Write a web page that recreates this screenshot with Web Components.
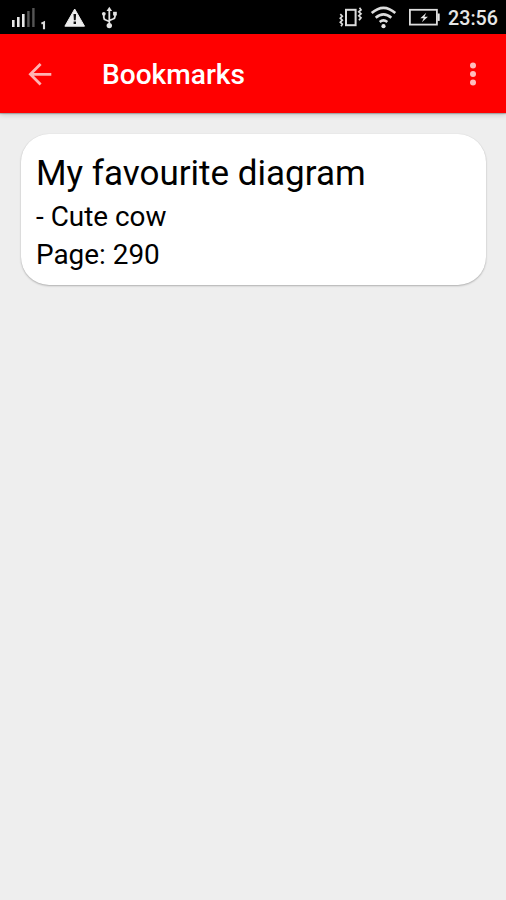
<!DOCTYPE html>
<html lang="en">
<head>
<meta charset="utf-8">
<title>Bookmarks</title>
<style>
  html, body { margin: 0; height: 100%; background: #eee; }
  body { font-family: Roboto, "Noto Sans", sans-serif; overflow: hidden; }
</style>
</head>
<body>
<bookmarks-app></bookmarks-app>
<script>
class StatusBar extends HTMLElement {
  constructor() {
    super();
    this.attachShadow({ mode: "open" }).innerHTML = `
      <style>
        :host { display: flex; height: 34px; background: #000; color: #e6e6e6; align-items: flex-start; box-sizing: border-box; padding: 0 8px 0 10px; }
        svg { display: block; flex: none; }
        .gap { flex: 1; }
        .time { font-size: 19.7px; font-weight: 500; line-height: 38px; height: 34px; width: 50px; white-space: nowrap; }
      </style>
      <svg width="110" height="34" viewBox="10 0 110 34">
        <g fill="#e8e8e8"><rect x="12" y="20" width="2.6" height="7"/><rect x="17" y="17" width="2.6" height="10"/><rect x="22" y="14" width="2.6" height="13"/></g>
        <g fill="#555"><rect x="27.2" y="11" width="2.4" height="16"/><rect x="32.2" y="8" width="2.4" height="19"/></g>
        <path d="M41.4 23.6l2.6-1.2v6.8" fill="none" stroke="#ddd" stroke-width="2.1"/>
        <path d="M74.7 9L84.5 26.2H64.9Z" fill="#eee" stroke="#eee" stroke-linejoin="round"/>
        <path d="M73.5 14h2.6l-.4 6.2h-1.8zM73.6 21.6h2.4v2.4h-2.4z" fill="#111"/>
        <g fill="none" stroke="#e4e4e4" stroke-width="1.8"><path d="M109.3 10v15M103.8 14v3.5q0 2 2 2.5l3.5 1.5M115 13v3.5q0 1.8-2 2.5l-3.7 1.5"/></g>
        <g fill="#e4e4e4"><path d="M109.3 6.8l2.8 4.2h-5.6z"/><circle cx="103.8" cy="13.8" r="1.9"/><rect x="113.1" y="11.8" width="3.7" height="3.7"/><circle cx="109.3" cy="25.6" r="2.7"/></g>
      </svg>
      <div class="gap"></div>
      <svg width="110" height="34" viewBox="338 0 110 34">
        <g fill="none" stroke="#ddd">
          <rect x="346" y="9.8" width="9.6" height="15.4" stroke-width="2"/>
          <path d="M340.3 14.2l2 2-2 2 2 2-2 2 2 2-1.2 2M359.5 7.8l1.5 2-2.2 2 2.2 2-2.2 2 2.2 2-2 2.5" stroke-width="1.7"/>
          <path d="M371.7 13q11.8-10.4 23.6 0M375.7 17.8q7.8-6.8 15.6 0M379.7 22q3.8-3.2 7.6 0" stroke-width="2.6"/>
          <rect x="409.9" y="9.8" width="27" height="14.8" stroke-width="1.8"/>
        </g>
        <g fill="#e8e8e8"><circle cx="383.5" cy="26.2" r="2.1"/><rect x="437.5" y="13.5" width="2.2" height="7.4"/><path d="M426.3 12.8l-6 5.4h3.4l-1.8 4 6-5.4h-3.5z"/></g>
      </svg>
      <div class="time"><slot></slot></div>`;
  }
}
customElements.define("status-bar", StatusBar);

class AppToolbar extends HTMLElement {
  constructor() {
    super();
    this.attachShadow({ mode: "open" }).innerHTML = `
      <style>
        :host { display: flex; align-items: center; box-sizing: border-box; height: 79px; padding: 0 22px 0 28px; background: #f00; color: #fff; box-shadow: 0 1px 1px rgba(0,0,0,.22), 0 2px 5px rgba(0,0,0,.16); position: relative; }
        .title { flex: 1; margin-left: 49px; padding-top: 3px; font-size: 28.1px; line-height: 34px; font-weight: 500; white-space: nowrap; }
        svg { display: block; flex: none; }
      </style>
      <svg width="25" height="24" viewBox="0 0 25 24"><path d="M23.3 12.3H3M12.6 2.1L2.4 12.3l10.2 10.2" fill="none" stroke="#ffb3b3" stroke-width="2.8"/></svg>
      <div class="title"><slot></slot></div>
      <svg width="22" height="24" viewBox="0 0 22 24"><g fill="#ffbcbc"><circle cx="11" cy="3.6" r="3"/><circle cx="11" cy="12.1" r="3"/><circle cx="11" cy="20.6" r="3"/></g></svg>`;
  }
}
customElements.define("app-toolbar", AppToolbar);

class BookmarkCard extends HTMLElement {
  constructor() {
    super();
    this.attachShadow({ mode: "open" }).innerHTML = `
      <style>
        :host { display: block; box-sizing: border-box; height: 151px; padding: 19px 15px 0; background: #fff; color: #000; border-radius: 28px; box-shadow: 0 1px 2px rgba(0,0,0,.26), 0 0 1px rgba(0,0,0,.1); white-space: nowrap; }
        .title { font-size: 35px; line-height: 42px; margin-bottom: 2.5px; }
        .line { font-size: 27.9px; line-height: 38px; }
      </style>
      <div class="title"><slot name="title"></slot></div>
      <div class="line"><slot name="note"></slot></div>
      <div class="line"><slot name="page"></slot></div>`;
  }
}
customElements.define("bookmark-card", BookmarkCard);

class BookmarksApp extends HTMLElement {
  constructor() {
    super();
    this.attachShadow({ mode: "open" }).innerHTML = `
      <style>
        :host { display: flex; flex-direction: column; width: 506px; height: 900px; background: #eee; }
        main { padding: 21px 20px 0 21px; }
      </style>
      <status-bar>23:56</status-bar>
      <app-toolbar>Bookmarks</app-toolbar>
      <main>
        <bookmark-card>
          <span slot="title">My favourite diagram</span>
          <span slot="note">- Cute cow</span>
          <span slot="page">Page: 290</span>
        </bookmark-card>
      </main>`;
  }
}
customElements.define("bookmarks-app", BookmarksApp);
</script>
</body>
</html>
